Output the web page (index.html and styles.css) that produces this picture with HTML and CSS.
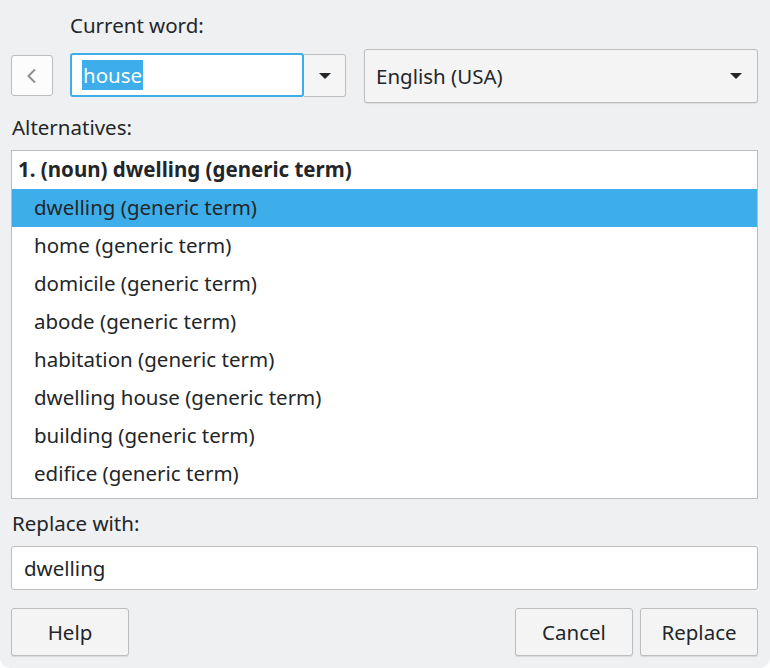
FILE: index.html
```html
<!DOCTYPE html>
<html>
<head>
<meta charset="utf-8">
<link rel="stylesheet" href="styles.css">
</head>
<body>
<div class="window">
  <div class="label label-indent">Current word:</div>
  <div class="top-row">
    <button class="back-btn" aria-label="Back">
      <svg width="14" height="18" viewBox="0 0 14 18"><path d="M10 2.5 L3.5 9 L10 15.5" fill="none" stroke="#8f9194" stroke-width="2"/></svg>
    </button>
    <div class="word-combo">
      <div class="word-input"><span class="sel">house</span></div>
      <div class="word-drop"><span class="tri"></span></div>
    </div>
    <div class="lang-combo">
      <span>English (USA)</span>
      <span class="tri"></span>
    </div>
  </div>
  <div class="label sec">Alternatives:</div>
  <div class="list">
    <div class="row head">1. (noun) dwelling (generic term)</div>
    <div class="row item selected">dwelling (generic term)</div>
    <div class="row item">home (generic term)</div>
    <div class="row item">domicile (generic term)</div>
    <div class="row item">abode (generic term)</div>
    <div class="row item">habitation (generic term)</div>
    <div class="row item">dwelling house (generic term)</div>
    <div class="row item">building (generic term)</div>
    <div class="row item">edifice (generic term)</div>
  </div>
  <div class="label sec">Replace with:</div>
  <div class="replace-input">dwelling</div>
  <div class="buttons">
    <button class="btn">Help</button>
    <span class="spacer"></span>
    <button class="btn">Cancel</button>
    <button class="btn">Replace</button>
  </div>
</div>
</body>
</html>
```
FILE: styles.css
```css
* { box-sizing: border-box; }
html, body { margin: 0; padding: 0; background: #ffffff; }
body {
  font-family: "Noto Sans", "Open Sans", sans-serif;
  font-size: 20.5px;
  color: #232629;
}
.window {
  width: 770px;
  height: 668px;
  background: #eff0f1;
  border-radius: 0 0 10px 10px;
  padding: 13px 12px 12px 11px;
  display: flex;
  flex-direction: column;
}
.label {
  height: 24px;
  line-height: 24px;
  padding-left: 1px;
}
.label-indent { padding-left: 59px; }
.sec { margin-top: 12px; margin-bottom: 11px; }
.top-row {
  margin-top: 12px;
  display: flex;
  align-items: center;
  height: 54px;
}
.back-btn {
  width: 42px;
  height: 41px;
  margin-top: -1px;
  background: #fcfcfc;
  border: 1px solid #bcbdbf;
  border-radius: 3px;
  padding: 0;
  display: flex;
  align-items: center;
  justify-content: center;
}
.word-combo {
  margin-left: 17px;
  display: flex;
  height: 44px;
  margin-top: -2px;
}
.word-input {
  width: 234px;
  height: 44px;
  background: #ffffff;
  border: 2px solid #3daee9;
  border-radius: 3px;
  padding: 5px 0 0 10px;
  line-height: 30px;
}
.sel {
  display: inline-block;
  background: #3daee9;
  color: #ffffff;
  height: 30px;
  padding: 0 1px;
}
.word-drop {
  width: 42px;
  height: 43px;
  margin-top: 1px;
  background: #f5f5f6;
  border: 1px solid #bcbdbf;
  border-left: none;
  border-radius: 0 3px 3px 0;
  display: flex;
  align-items: center;
  justify-content: center;
}
.tri {
  width: 0;
  height: 0;
  border-left: 6px solid transparent;
  border-right: 6px solid transparent;
  border-top: 6px solid #232629;
}
.lang-combo {
  margin-left: 18px;
  flex: 1;
  height: 54px;
  background: #f4f4f5;
  border: 1px solid #bcbdbf;
  border-radius: 3px;
  box-shadow: 0 1px 1px rgba(0,0,0,0.08);
  display: flex;
  align-items: center;
  justify-content: space-between;
  padding: 0 15px 0 11px;
}
.list {
  height: 349px;
  background: #ffffff;
  border: 1px solid #bcbdbf;
  overflow: hidden;
}
.row {
  height: 38px;
  line-height: 37px;
  padding-bottom: 1px;
  white-space: nowrap;
}
.head {
  font-weight: bold;
  padding-left: 6px;
}
.item { padding-left: 22px; }
.selected { background: #3daee9; }
.replace-input {
  height: 44px;
  background: #ffffff;
  border: 1px solid #bcbdbf;
  border-radius: 3px;
  line-height: 42px;
  padding-left: 12px;
}
.buttons {
  margin-top: 18px;
  display: flex;
  gap: 7px;
}
.spacer { flex: 1; }
.btn {
  width: 118px;
  height: 48px;
  font-family: inherit;
  font-size: 20.5px;
  color: #232629;
  background: #f4f4f5;
  border: 1px solid #bcbdbf;
  border-radius: 3px;
  box-shadow: 0 1px 1px rgba(0,0,0,0.1);
  padding: 0;
}
```
